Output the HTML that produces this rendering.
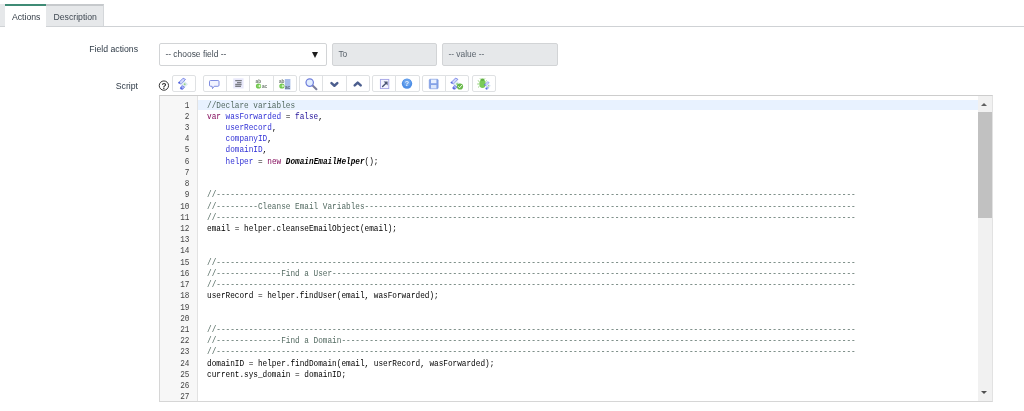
<!DOCTYPE html>
<html lang="en"><head><meta charset="utf-8"><title>Inbound Email Action</title>
<style>
html,body{margin:0;padding:0;background:#fff;width:1024px;height:411px;overflow:hidden}
body{font-family:"Liberation Sans",sans-serif;font-size:8.7px;color:#343d47;position:relative}
.abs{position:absolute}
#tabbar{position:absolute;left:0;top:4px;width:1024px;height:22px;border-bottom:1px solid #cfd2d5;box-sizing:content-box}
#tabstub{position:absolute;left:0;top:4px;width:5px;height:22px;background:#e6e8ea}
.tab{position:absolute;top:4px;height:20px;box-sizing:content-box;border-top:2px solid #c6c9cc;line-height:22px;text-align:center;text-indent:1.4px;background:#e6e8ea;color:#3f4852}
#tab1{left:5px;width:41px;background:#fff;border-top-color:#3f8b75;height:21px;color:#343d47}
#tab2{left:46px;width:58px;border-right:1px solid #d4d7da;box-sizing:border-box;height:22px}
.lbl{position:absolute;left:0;width:138px;text-align:right;white-space:nowrap;color:#2e3a46}
.inp{position:absolute;top:43px;height:23px;box-sizing:border-box;border:1px solid #d2d4d6;border-radius:2px;background:#e6e8ea;line-height:21px;padding-left:5.4px;color:#5a636c;white-space:nowrap;font-size:8.4px}
#sel{left:159px;width:168px;background:#fff;color:#454e57;font-size:8.45px}
#to{left:332px;width:105px}
#val{left:442px;width:116px}
#arr{position:absolute;left:312.1px;top:52.1px;width:0;height:0;border-left:3.75px solid transparent;border-right:3.75px solid transparent;border-top:6.1px solid #1c1c1c}
.btn{position:absolute;top:75px;height:17px;box-sizing:border-box;border:1px solid #dfe1e3;background:#fff;border-radius:2px}
.btn svg{position:absolute;left:0;top:0}
#ed{position:absolute;left:159px;top:95px;width:834px;height:307px;box-sizing:border-box;border:1px solid #d6d6d6;border-top-color:#cdcdcd;border-right-color:#e2e2e2;background:#fff;overflow:hidden;font-family:"Liberation Mono","DejaVu Sans Mono",monospace;font-size:8.6px;color:#000}
#gut{position:absolute;left:0;top:0;width:38px;height:305px;background:#f7f7f7;border-right:1px solid #e2e2e2;box-sizing:border-box}
.n{position:absolute;left:0;width:29.5px;text-align:right;height:11.225px;line-height:11.225px;color:#444;transform:scaleX(0.8985);transform-origin:100% 0}
.l{position:absolute;left:47.3px;height:11.225px;line-height:11.225px;white-space:pre;transform:scaleX(0.8985);transform-origin:0 0}
#act{position:absolute;left:38px;top:3.8px;width:780px;height:10.2px;background:#e8f2ff}
.c{color:#536a61}
.k{color:#7f0055}
.d{color:#3030d6}
.a{color:#221199}
.t{font-weight:bold;font-style:italic}
#sb{position:absolute;left:818px;top:0;width:15px;height:305px;background:#f1f1f1}
#thumb{position:absolute;left:0;top:16px;width:14px;height:106px;background:#c1c1c1}
.sa{position:absolute;left:3.4px;width:0;height:0;border-left:3.9px solid transparent;border-right:3.9px solid transparent}
#sup{top:7px;border-bottom:3.8px solid #606060}
#sdn{top:295.2px;border-top:3.8px solid #505050}
#wrap{position:absolute;left:0;top:0;width:1024px;height:411px;will-change:transform}
</style></head><body><div id="wrap">
<div id="tabbar"></div><div id="tabstub"></div>
<div class="tab" id="tab1">Actions</div>
<div class="tab" id="tab2">Description</div>
<div class="lbl" style="top:44px;line-height:10px">Field actions</div>
<div class="inp" id="sel">-- choose field --</div><div id="arr"></div>
<div class="inp" id="to">To</div>
<div class="inp" id="val">-- value --</div>
<div class="lbl" style="top:81px;line-height:10px">Script</div>
<svg class="abs" style="left:157px;top:78px" width="14" height="14" viewBox="157 78 14 14"><circle cx="163.9" cy="85.6" r="4.65" fill="#fff" stroke="#2b2b2b" stroke-width="0.95"/><text x="163.9" y="88.6" text-anchor="middle" font-family="Liberation Sans, sans-serif" font-size="8.2" font-weight="bold" fill="#2b2b2b">?</text></svg>
<div class="btn" style="left:172px;width:24px;border-radius:2px 2px 2px 2px"><svg style="left:-1px;top:-1px" width="24" height="17" viewBox="172 75 24 17"><path d="M183.10 78.20 L185.50 79.40 L181.10 84.20 L178.70 82.60 Z" fill="#d3d9fb" stroke="#6372e2" stroke-width="0.75" stroke-linejoin="round"/><path d="M181.50 84.00 L184.10 81.40 L187.50 84.20 L184.50 87.00 Z" fill="#e9f3ee" stroke="#bcd0f2" stroke-width="0.50" stroke-linejoin="round"/><circle cx="184.70" cy="84.20" r="1.00" fill="#93cf8c"/><path d="M184.50 87.00 L182.70 89.40 L180.30 88.20 L181.90 85.60 Z" fill="#bcc5f7" stroke="#6372e2" stroke-width="0.75" stroke-linejoin="round"/><circle cx="179.20" cy="82.70" r="0.95" fill="#5566dd"/><circle cx="181.40" cy="88.40" r="1.15" fill="#5566dd"/></svg></div>
<div class="btn" style="left:203px;width:24px;border-radius:2px 0 0 2px"><svg style="left:-1px;top:-1px" width="24" height="17" viewBox="203 75 24 17"><path d="M210.6 80.5h7.3a1.1 1.1 0 0 1 1.1 1.1v3.6a1.1 1.1 0 0 1 -1.1 1.1h-3.7l-1.7 2.3l-0.4 -2.3h-1.5a1.1 1.1 0 0 1 -1.1 -1.1v-3.6a1.1 1.1 0 0 1 1.1 -1.1z" fill="#f1f3ff" stroke="#7080dc" stroke-width="0.9" stroke-linejoin="round"/></svg></div>
<div class="btn" style="left:226px;width:24px;border-radius:0 0 0 0"><svg style="left:-1px;top:-1px" width="24" height="17" viewBox="226 75 24 17"><rect x="233.2" y="78.3" width="10.4" height="10.2" fill="#e9e9fb"/><path d="M235.2 80.7h6.6M237 82.6h4.4M235.2 84.5h6.4M235.2 86.4h5.8" stroke="#7b7d85" stroke-width="1.3" fill="none"/></svg></div>
<div class="btn" style="left:249px;width:25px;border-radius:0 0 0 0"><svg style="left:-1px;top:-1px" width="25" height="17" viewBox="249 75 25 17"><text x="255.6" y="82.6" font-family="Liberation Sans, sans-serif" font-size="4.7" font-weight="bold" fill="#6c786e">ab</text><circle cx="258.5" cy="86" r="2.6" fill="#6cc548"/><path d="M256.8 86h2.2v-1.2l1.7 1.2l-1.7 1.2v-1.2" fill="#eaffdc" stroke="#eaffdc" stroke-width="0.4"/><text x="261.9" y="88" font-family="Liberation Sans, sans-serif" font-size="4.7" font-weight="bold" fill="#6c786e">ac</text></svg></div>
<div class="btn" style="left:273px;width:24px;border-radius:0 2px 2px 0"><svg style="left:-1px;top:-1px" width="24" height="17" viewBox="273 75 24 17"><rect x="284.8" y="79" width="5.6" height="10.6" fill="#a9bde8"/><text x="279" y="82.6" font-family="Liberation Sans, sans-serif" font-size="4.7" font-weight="bold" fill="#6c786e">ab</text><circle cx="281.9" cy="86" r="2.6" fill="#6cc548"/><path d="M280.2 86h2.2v-1.2l1.7 1.2l-1.7 1.2v-1.2" fill="#eaffdc" stroke="#eaffdc" stroke-width="0.4"/><text x="285" y="88.6" font-family="Liberation Sans, sans-serif" font-size="4.7" font-weight="bold" fill="#5d6878">ac</text></svg></div>
<div class="btn" style="left:299px;width:24px;border-radius:2px 0 0 2px"><svg style="left:-1px;top:-1px" width="24" height="17" viewBox="299 75 24 17"><path d="M312.6 85.6L316.4 89.2" stroke="#7c7e9c" stroke-width="2.1" stroke-linecap="round"/><circle cx="309.7" cy="82.6" r="3.7" fill="#e2eeff" stroke="#6d7cdb" stroke-width="1.2"/></svg></div>
<div class="btn" style="left:322px;width:25px;border-radius:0 0 0 0"><svg style="left:-1px;top:-1px" width="25" height="17" viewBox="322 75 25 17"><path d="M331.5 83.1L334.4 85.7L337.3 83.1" fill="none" stroke="#4c5e8e" stroke-width="2.5" stroke-linecap="round" stroke-linejoin="round"/></svg></div>
<div class="btn" style="left:346px;width:24px;border-radius:0 2px 2px 0"><svg style="left:-1px;top:-1px" width="24" height="17" viewBox="346 75 24 17"><path d="M354.7 85.4L357.7 82.6L360.7 85.4" fill="none" stroke="#4c5e8e" stroke-width="2.5" stroke-linecap="round" stroke-linejoin="round"/></svg></div>
<div class="btn" style="left:372px;width:24px;border-radius:2px 0 0 2px"><svg style="left:-1px;top:-1px" width="24" height="17" viewBox="372 75 24 17"><rect x="380.4" y="79.4" width="8.4" height="9.2" fill="#f3f3ff" stroke="#a3a3e6" stroke-width="0.9"/><path d="M382.6 86.6L386 83.2" stroke="#4a5474" stroke-width="1.4" stroke-linecap="round"/><path d="M383.6 81.6h4v4z" fill="#4a5474"/></svg></div>
<div class="btn" style="left:395px;width:25px;border-radius:0 2px 2px 0"><svg style="left:-1px;top:-1px" width="25" height="17" viewBox="395 75 25 17"><circle cx="407" cy="83.6" r="5.2" fill="#4f8fe6"/><circle cx="407" cy="82.6" r="3.6" fill="#6aa4ee"/><text x="407" y="86.2" text-anchor="middle" font-family="Liberation Sans, sans-serif" font-size="7.2" font-weight="bold" fill="#e8f2ff">?</text></svg></div>
<div class="btn" style="left:422px;width:24px;border-radius:2px 0 0 2px"><svg style="left:-1px;top:-1px" width="24" height="17" viewBox="422 75 24 17"><rect x="429.2" y="79.2" width="9" height="9.6" rx="1" fill="#84a2e6" stroke="#7792dc" stroke-width="0.5"/><rect x="431" y="79.6" width="5.4" height="3.6" fill="#e8f0ff"/><rect x="431" y="85" width="5.4" height="3.4" fill="#dbe6fb"/></svg></div>
<div class="btn" style="left:445px;width:24px;border-radius:0 2px 2px 0"><svg style="left:-1px;top:-1px" width="24" height="17" viewBox="445 75 24 17"><path d="M455.50 78.10 L457.90 79.30 L453.50 84.10 L451.10 82.50 Z" fill="#d3d9fb" stroke="#6372e2" stroke-width="0.75" stroke-linejoin="round"/><path d="M453.90 83.90 L456.50 81.30 L459.90 84.10 L456.90 86.90 Z" fill="#e9f3ee" stroke="#bcd0f2" stroke-width="0.50" stroke-linejoin="round"/><circle cx="457.10" cy="84.10" r="1.00" fill="#93cf8c"/><path d="M456.90 86.90 L455.10 89.30 L452.70 88.10 L454.30 85.50 Z" fill="#bcc5f7" stroke="#6372e2" stroke-width="0.75" stroke-linejoin="round"/><circle cx="451.60" cy="82.60" r="0.95" fill="#5566dd"/><circle cx="453.80" cy="88.30" r="1.15" fill="#5566dd"/><circle cx="460" cy="86.5" r="3.1" fill="#68b84a"/><path d="M458.4 86.5l1.2 1.3l2.1 -2.6" fill="none" stroke="#f2ffe8" stroke-width="0.95" stroke-linecap="round" stroke-linejoin="round"/></svg></div>
<div class="btn" style="left:472px;width:24px;border-radius:2px 2px 2px 2px"><svg style="left:-1px;top:-1px" width="24" height="17" viewBox="472 75 24 17"><path d="M479.2 81.4l-1.4 -0.8M479 84h-1.8M479.4 86.4l-1.4 1M485.6 81.4l1.2 -0.8M480.8 79.4l-0.8 -1M484.2 79.4l0.8 -1" stroke="#6fbf4f" stroke-width="0.7" fill="none"/><ellipse cx="482.5" cy="83.8" rx="3.2" ry="4.3" fill="#7acb58"/><ellipse cx="482.5" cy="79.8" rx="1.9" ry="1.2" fill="#62b244"/><path d="M487.53 81.72 L489.16 82.54 L486.17 85.80 L484.54 84.72 Z" fill="#d3d9fb" stroke="#6372e2" stroke-width="0.51" stroke-linejoin="round"/><path d="M486.44 85.67 L488.21 83.90 L490.52 85.80 L488.48 87.71 Z" fill="#e9f3ee" stroke="#bcd0f2" stroke-width="0.34" stroke-linejoin="round"/><circle cx="488.62" cy="85.80" r="0.68" fill="#93cf8c"/><path d="M488.48 87.71 L487.26 89.34 L485.63 88.52 L486.72 86.76 Z" fill="#bcc5f7" stroke="#6372e2" stroke-width="0.51" stroke-linejoin="round"/><circle cx="484.88" cy="84.78" r="0.65" fill="#5566dd"/><circle cx="486.38" cy="88.66" r="0.78" fill="#5566dd"/></svg></div>
<div id="ed">
<div id="act"></div>
<div id="gut">
<div class="n" style="top:4.50px">1</div>
<div class="n" style="top:15.72px">2</div>
<div class="n" style="top:26.95px">3</div>
<div class="n" style="top:38.17px">4</div>
<div class="n" style="top:49.40px">5</div>
<div class="n" style="top:60.62px">6</div>
<div class="n" style="top:71.85px">7</div>
<div class="n" style="top:83.08px">8</div>
<div class="n" style="top:94.30px">9</div>
<div class="n" style="top:105.52px">10</div>
<div class="n" style="top:116.75px">11</div>
<div class="n" style="top:127.97px">12</div>
<div class="n" style="top:139.20px">13</div>
<div class="n" style="top:150.42px">14</div>
<div class="n" style="top:161.65px">15</div>
<div class="n" style="top:172.88px">16</div>
<div class="n" style="top:184.10px">17</div>
<div class="n" style="top:195.32px">18</div>
<div class="n" style="top:206.55px">19</div>
<div class="n" style="top:217.78px">20</div>
<div class="n" style="top:229.00px">21</div>
<div class="n" style="top:240.22px">22</div>
<div class="n" style="top:251.45px">23</div>
<div class="n" style="top:262.68px">24</div>
<div class="n" style="top:273.90px">25</div>
<div class="n" style="top:285.12px">26</div>
<div class="n" style="top:296.35px">27</div>
</div>
<div class="l" style="top:4.50px"><span class="c">//Declare variables</span></div>
<div class="l" style="top:15.72px"><span class="k">var</span> <span class="d">wasForwarded</span> = <span class="a">false</span>,</div>
<div class="l" style="top:26.95px">    <span class="d">userRecord</span>,</div>
<div class="l" style="top:38.17px">    <span class="d">companyID</span>,</div>
<div class="l" style="top:49.40px">    <span class="d">domainID</span>,</div>
<div class="l" style="top:60.62px">    <span class="d">helper</span> = <span class="k">new</span> <span class="t">DomainEmailHelper</span>();</div>
<div class="l" style="top:71.85px"></div>
<div class="l" style="top:83.08px"></div>
<div class="l" style="top:94.30px"><span class="c">//------------------------------------------------------------------------------------------------------------------------------------------</span></div>
<div class="l" style="top:105.52px"><span class="c">//---------Cleanse Email Variables----------------------------------------------------------------------------------------------------------</span></div>
<div class="l" style="top:116.75px"><span class="c">//------------------------------------------------------------------------------------------------------------------------------------------</span></div>
<div class="l" style="top:127.97px">email = helper.cleanseEmailObject(email);</div>
<div class="l" style="top:139.20px"></div>
<div class="l" style="top:150.42px"></div>
<div class="l" style="top:161.65px"><span class="c">//------------------------------------------------------------------------------------------------------------------------------------------</span></div>
<div class="l" style="top:172.88px"><span class="c">//--------------Find a User-----------------------------------------------------------------------------------------------------------------</span></div>
<div class="l" style="top:184.10px"><span class="c">//------------------------------------------------------------------------------------------------------------------------------------------</span></div>
<div class="l" style="top:195.32px">userRecord = helper.findUser(email, wasForwarded);</div>
<div class="l" style="top:206.55px"></div>
<div class="l" style="top:217.78px"></div>
<div class="l" style="top:229.00px"><span class="c">//------------------------------------------------------------------------------------------------------------------------------------------</span></div>
<div class="l" style="top:240.22px"><span class="c">//--------------Find a Domain---------------------------------------------------------------------------------------------------------------</span></div>
<div class="l" style="top:251.45px"><span class="c">//------------------------------------------------------------------------------------------------------------------------------------------</span></div>
<div class="l" style="top:262.68px">domainID = helper.findDomain(email, userRecord, wasForwarded);</div>
<div class="l" style="top:273.90px">current.sys_domain = domainID;</div>
<div class="l" style="top:285.12px"></div>
<div class="l" style="top:296.35px"></div>
<div id="sb"><div id="thumb"></div><div class="sa" id="sup"></div><div class="sa" id="sdn"></div></div>
</div>
</div>
</body></html>
